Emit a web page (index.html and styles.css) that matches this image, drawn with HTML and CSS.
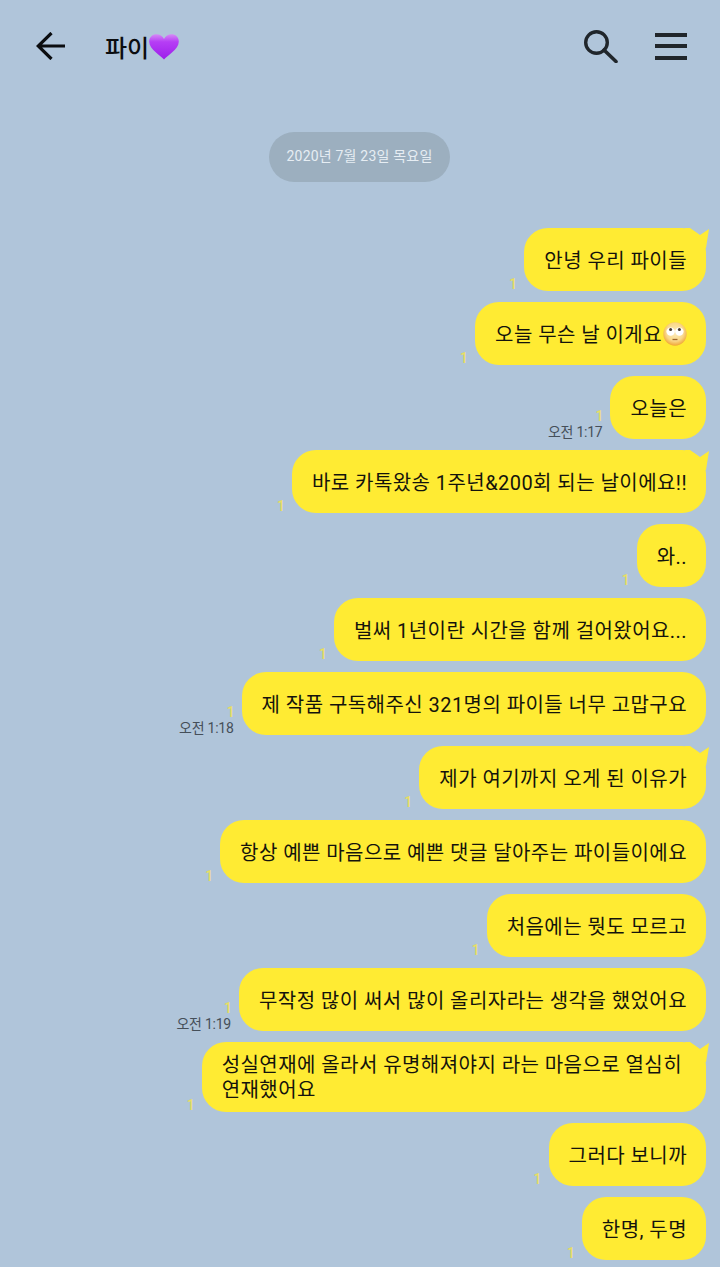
FILE: index.html
```html
<!DOCTYPE html>
<html lang="ko">
<head>
    <meta charset="UTF-8">
    <meta name="viewport" content="width=device-width, initial-scale=1.0">
    <title>파이</title>
    <link rel="stylesheet" href="styles.css">
</head>
<body>
    <header class="top-bar">
        <svg class="icon-back" width="30" height="28" viewBox="0 0 30 28">
            <path d="M15.5 1 L2.2 14 L15.5 27 M2.2 14 H29" fill="none" stroke="#0b0d10" stroke-width="3.2"/>
        </svg>
        <div class="room-name">파이<svg class="heart" width="30" height="26" viewBox="0 0 30 26">
            <defs>
                <linearGradient id="heartFill" x1="0" y1="0" x2="0" y2="1">
                    <stop offset="0" stop-color="#d58af6"/>
                    <stop offset="0.3" stop-color="#b63ef5"/>
                    <stop offset="1" stop-color="#9c1eea"/>
                </linearGradient>
            </defs>
            <path d="M15 25.5 C12 21.5 0.2 15.5 0.2 7.5 C0.2 3 3.6 0.3 7.4 0.3 C10.8 0.3 13.6 2 15 5 C16.4 2 19.2 0.3 22.6 0.3 C26.4 0.3 29.8 3 29.8 7.5 C29.8 15.5 18 21.5 15 25.5 Z" fill="url(#heartFill)"/>
        </svg></div>
        <div class="top-icons">
            <svg width="34" height="33" viewBox="0 0 34 33">
                <circle cx="12.5" cy="12.5" r="10.8" fill="none" stroke="#20262b" stroke-width="3.4"/>
                <path d="M20 20 L32 31.5" stroke="#20262b" stroke-width="3.6" stroke-linecap="round"/>
            </svg>
            <div class="menu-icon"><span></span><span></span><span></span></div>
        </div>
    </header>

    <div class="date-row"><div class="date-pill">2020년 7월 23일 목요일</div></div>

    <main class="chat">
        <div class="msg tail">
            <div class="meta"><span class="unread">1</span></div>
            <div class="bubble">안녕 우리 파이들</div>
        </div>
        <div class="msg">
            <div class="meta"><span class="unread">1</span></div>
            <div class="bubble">오늘 무슨 날 이게요<svg class="face" width="24" height="24" viewBox="0 0 24 24">
                <defs>
                    <radialGradient id="faceFill" cx="0.5" cy="0.42" r="0.58">
                        <stop offset="0" stop-color="#fdedbe"/>
                        <stop offset="0.65" stop-color="#fad88a"/>
                        <stop offset="1" stop-color="#f0a635"/>
                    </radialGradient>
                </defs>
                <circle cx="12" cy="12" r="11.7" fill="url(#faceFill)"/>
                <circle cx="7.6" cy="9.6" r="4.2" fill="#fff"/>
                <circle cx="16.4" cy="9.6" r="4.2" fill="#fff"/>
                <circle cx="7.6" cy="7.6" r="1.5" fill="#4a3a30"/>
                <circle cx="16.4" cy="7.6" r="1.5" fill="#4a3a30"/>
                <path d="M9.5 17.5 H14.5" stroke="#a0682c" stroke-width="1.3"/>
            </svg></div>
        </div>
        <div class="msg">
            <div class="meta"><span class="unread">1</span><span class="time">오전 1:17</span></div>
            <div class="bubble">오늘은</div>
        </div>
        <div class="msg tail">
            <div class="meta"><span class="unread">1</span></div>
            <div class="bubble">바로 카톡왔송 1주년&amp;200회 되는 날이에요!!</div>
        </div>
        <div class="msg">
            <div class="meta"><span class="unread">1</span></div>
            <div class="bubble">와..</div>
        </div>
        <div class="msg">
            <div class="meta"><span class="unread">1</span></div>
            <div class="bubble">벌써 1년이란 시간을 함께 걸어왔어요...</div>
        </div>
        <div class="msg">
            <div class="meta"><span class="unread">1</span><span class="time">오전 1:18</span></div>
            <div class="bubble">제 작품 구독해주신 321명의 파이들 너무 고맙구요</div>
        </div>
        <div class="msg tail">
            <div class="meta"><span class="unread">1</span></div>
            <div class="bubble">제가 여기까지 오게 된 이유가</div>
        </div>
        <div class="msg">
            <div class="meta"><span class="unread">1</span></div>
            <div class="bubble">항상 예쁜 마음으로 예쁜 댓글 달아주는 파이들이에요</div>
        </div>
        <div class="msg">
            <div class="meta"><span class="unread">1</span></div>
            <div class="bubble">처음에는 뭣도 모르고</div>
        </div>
        <div class="msg">
            <div class="meta"><span class="unread">1</span><span class="time">오전 1:19</span></div>
            <div class="bubble">무작정 많이 써서 많이 올리자라는 생각을 했었어요</div>
        </div>
        <div class="msg tail">
            <div class="meta"><span class="unread">1</span></div>
            <div class="bubble two-line">성실연재에 올라서 유명해져야지 라는 마음으로 열심히<br>연재했어요</div>
        </div>
        <div class="msg">
            <div class="meta"><span class="unread">1</span></div>
            <div class="bubble">그러다 보니까</div>
        </div>
        <div class="msg">
            <div class="meta"><span class="unread">1</span></div>
            <div class="bubble">한명, 두명</div>
        </div>
    </main>
</body>
</html>
```

FILE: styles.css
```css
body {
    margin: 0;
    height: 1267px;
    overflow: hidden;
    background-color: #b0c5da;
    color: #14130c;
    font-family: Roboto, "Noto Sans CJK KR", sans-serif;
}
.top-bar {
    display: flex;
    align-items: center;
    height: 92px;
    padding: 0 33px 0 36px;
    box-sizing: border-box;
}
.room-name {
    display: flex;
    align-items: center;
    margin-left: 39px;
    font-size: 24px;
    font-weight: 500;
    color: #0b0d10;
}
.heart {
    margin-top: 2px;
}
.top-icons {
    display: flex;
    align-items: center;
    gap: 37px;
    margin-left: auto;
}
.menu-icon {
    display: flex;
    flex-direction: column;
    gap: 7.5px;
    width: 32px;
}
.menu-icon span {
    height: 4px;
    background-color: #20262b;
}
.date-row {
    display: flex;
    justify-content: center;
    margin-top: 40px;
    padding-right: 1px;
}
.date-pill {
    width: 181px;
    height: 50px;
    line-height: 48px;
    text-align: center;
    border-radius: 25px;
    background-color: #9cafbf;
    color: #e6edf3;
    font-size: 14px;
    letter-spacing: 0.2px;
}
.chat {
    display: flex;
    flex-direction: column;
    gap: 11px;
    margin-top: 46px;
    padding-right: 14px;
}
.msg {
    display: flex;
    justify-content: flex-end;
    align-items: flex-end;
}
.meta {
    display: flex;
    flex-direction: column;
    align-items: flex-end;
    margin-right: 8px;
}
.unread {
    margin-right: -1px;
    font-size: 14px;
    font-weight: 500;
    line-height: 14px;
    color: #e8de62;
}
.time {
    margin-top: 2px;
    font-size: 14px;
    line-height: 14px;
    letter-spacing: -0.25px;
    color: #454f59;
}
.bubble {
    position: relative;
    display: flex;
    align-items: center;
    height: 63px;
    padding: 0 19px 0 20px;
    box-sizing: border-box;
    border-radius: 24px;
    background-color: #ffeb33;
    font-size: 20px;
    letter-spacing: 0.44px;
    white-space: nowrap;
}
.bubble.two-line {
    display: block;
    height: 70px;
    padding: 11px 24px 0 20px;
    line-height: 25px;
}
.face {
    margin-left: 1px;
}
.tail .bubble::after {
    content: "";
    position: absolute;
    top: 0;
    right: -3px;
    width: 24px;
    height: 20px;
    background-color: #ffeb33;
    clip-path: polygon(0 0, 5px 0, 15px 7px, 24px 1px, 21px 20px, 0 20px);
}
```
